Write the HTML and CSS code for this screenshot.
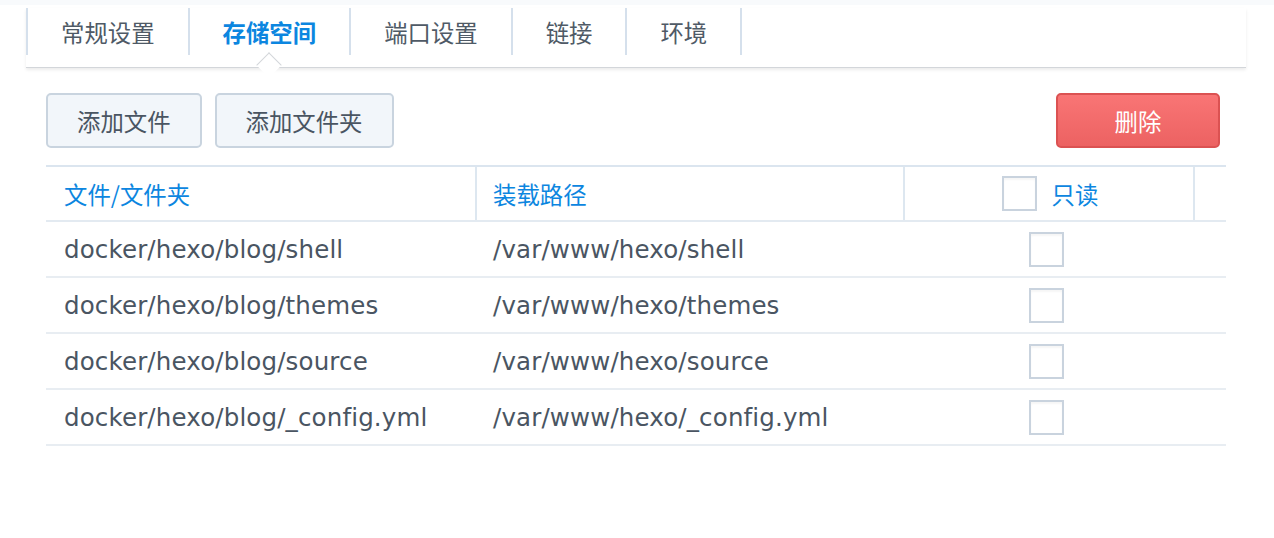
FILE: index.html
```html
<!DOCTYPE html>
<html lang="zh">
<head>
<meta charset="utf-8">
<link rel="stylesheet" href="styles.css">
</head>
<body>
<div class="topstrip"></div>
<div class="page">
  <nav class="tabs">
    <div class="tab">常规设置</div>
    <div class="tab active">存储空间</div>
    <div class="tab">端口设置</div>
    <div class="tab">链接</div>
    <div class="tab">环境</div>
  </nav>
  <div class="content">
    <div class="toolbar">
      <div class="btn-group">
        <button class="btn">添加文件</button>
        <button class="btn">添加文件夹</button>
      </div>
      <button class="btn btn-danger">删除</button>
    </div>
    <div class="table">
      <div class="row head">
        <div class="cell c1">文件/文件夹</div>
        <div class="cell c2">装载路径</div>
        <div class="cell c3"><span class="checkbox"></span><span class="ro">只读</span></div>
        <div class="cell c4"></div>
      </div>
      <div class="row">
        <div class="cell c1">docker/hexo/blog/shell</div>
        <div class="cell c2">/var/www/hexo/shell</div>
        <div class="cell c3"><span class="checkbox"></span></div>
        <div class="cell c4"></div>
      </div>
      <div class="row">
        <div class="cell c1">docker/hexo/blog/themes</div>
        <div class="cell c2">/var/www/hexo/themes</div>
        <div class="cell c3"><span class="checkbox"></span></div>
        <div class="cell c4"></div>
      </div>
      <div class="row">
        <div class="cell c1">docker/hexo/blog/source</div>
        <div class="cell c2">/var/www/hexo/source</div>
        <div class="cell c3"><span class="checkbox"></span></div>
        <div class="cell c4"></div>
      </div>
      <div class="row">
        <div class="cell c1">docker/hexo/blog/_config.yml</div>
        <div class="cell c2">/var/www/hexo/_config.yml</div>
        <div class="cell c3"><span class="checkbox"></span></div>
        <div class="cell c4"></div>
      </div>
    </div>
  </div>
</div>
</body>
</html>
```
FILE: styles.css
```css
html, body {
  margin: 0;
  padding: 0;
  background: #ffffff;
}
body {
  font-family: "DejaVu Sans", "Noto Sans CJK SC", sans-serif;
  color: #4a5562;
  width: 1274px;
  height: 538px;
  overflow: hidden;
}
.topstrip {
  height: 5px;
  background: #f8fafc;
}
.page {
  padding: 3px 28px 0 26px;
}
.tabs {
  display: flex;
  height: 60px;
  border-bottom: 1px solid #d3d6da;
  box-shadow: 0 2px 3px rgba(0, 0, 0, 0.08);
  position: relative;
  box-sizing: border-box;
}
.tab {
  position: relative;
  height: 47px;
  display: flex;
  align-items: center;
  padding: 0 33px;
  border-left: 2px solid #d5e0ec;
  font-family: "Noto Sans CJK SC", sans-serif;
  font-size: 23.4px;
  color: #4f5a66;
}
.tab:last-child {
  border-right: 2px solid #d5e0ec;
}
.tab.active {
  color: #0c86e0;
  font-weight: 600;
}
.tab.active::after {
  content: "";
  position: absolute;
  left: 50%;
  bottom: -19px;
  width: 17px;
  height: 17px;
  margin-left: -9px;
  background: #ffffff;
  border-top: 1px solid #d3d6da;
  border-left: 1px solid #d3d6da;
  transform: rotate(45deg);
}
.content {
  padding: 25px 0 0 20px;
}
.toolbar {
  display: flex;
  justify-content: space-between;
  width: 1174px;
}
.btn-group {
  display: flex;
  gap: 13px;
}
.btn {
  height: 55px;
  padding: 0 29px;
  font-family: "Noto Sans CJK SC", sans-serif;
  font-size: 23.4px;
  color: #4a5562;
  background: #f2f6fa;
  border: 2px solid #c9d4df;
  border-radius: 5px;
  box-sizing: border-box;
}
.btn-danger {
  width: 164px;
  color: #ffffff;
  background: linear-gradient(#f97575, #ec6262);
  border: 2px solid #db5252;
}
.table {
  margin-top: 17px;
  width: 1180px;
  border-top: 2px solid #dbe5ef;
}
.row {
  display: flex;
  height: 56px;
  border-bottom: 2px solid #e8edf2;
  box-sizing: border-box;
  font-size: 24.5px;
  letter-spacing: 0.15px;
}
.row.head {
  height: 55px;
  border-bottom: 2px solid #e3eaf1;
  color: #0c86e0;
  font-family: "Noto Sans CJK SC", sans-serif;
  font-size: 23.4px;
  letter-spacing: 0;
}
.cell {
  display: flex;
  align-items: center;
  box-sizing: border-box;
  white-space: nowrap;
}
.c1 { width: 429px; padding-left: 18px; }
.c2 { width: 428px; padding-left: 18px; }
.c3 { width: 290px; justify-content: center; }
.c4 { width: 33px; }
.head .c2, .head .c3, .head .c4 {
  border-left: 2px solid #dde7f0;
}
.head .c2 { padding-left: 16px; }
.head .c3 { padding-left: 2px; }
.checkbox {
  display: inline-block;
  width: 35px;
  height: 35px;
  border: 2px solid #c9d3de;
  box-sizing: border-box;
  background: #ffffff;
  box-shadow: inset 0 2px 2px rgba(0, 0, 0, 0.04);
}
.row:not(.head) .checkbox {
  margin-left: -3px;
}
.ro {
  margin-left: 15px;
}
```
